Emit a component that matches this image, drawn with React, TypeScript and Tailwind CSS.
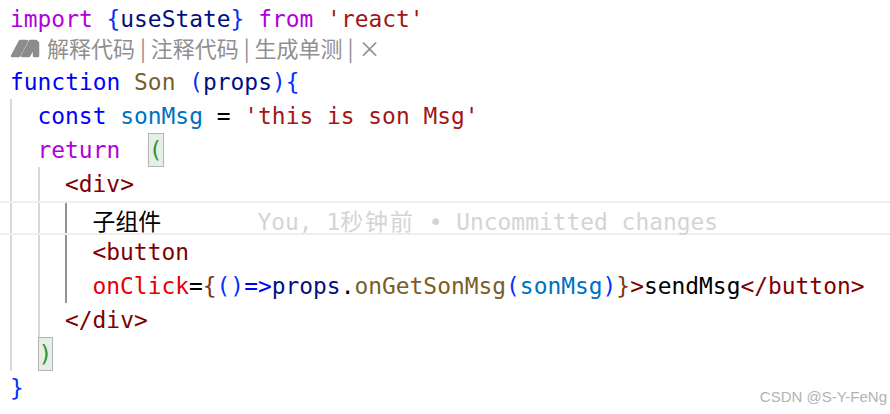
import React from 'react';

const KW = 'text-[#af00db]';
const ST = 'text-[#0000ff]';
const B1 = 'text-[#0431fa]';
const B2 = 'text-[#319331]';
const B3 = 'text-[#7b3814]';
const VAR = 'text-[#001080]';
const CVAR = 'text-[#0070c1]';
const STR = 'text-[#a31515]';
const FN = 'text-[#795e26]';
const TAG = 'text-[#800000]';
const ATTR = 'text-[#e50000]';

const Line: React.FC<{ children: React.ReactNode; className?: string }> = ({ children, className = '' }) => (
    <div className={`h-[34px] leading-[34px] whitespace-pre ${className}`}>{children}</div>
);

const Guide: React.FC<{ children: React.ReactNode; active?: boolean }> = ({ children, active }) => (
    <div className={`border-l-2 pl-[25.5px] ${active ? 'border-[#939393]' : 'border-[#d9d9d9]'}`}>{children}</div>
);

const Match: React.FC<{ children: React.ReactNode }> = ({ children }) => (
    <span className={`inline-block h-[34px] leading-[32px] border border-[#b4b4b4] bg-[#e6efe6] ${B2}`}>{children}</span>
);

const LensIcon = () => (
    <svg width="30" height="20" viewBox="0 0 30 20" className="shrink-0">
        <g fill="#8c8c8c" stroke="#8c8c8c" strokeWidth="2.5" strokeLinejoin="round">
            <polygon points="2,18 9,18 17,3 10,3" />
            <polygon points="12,18 19,18 24,9 24,18 28,18 28,5 26,3 20,3" />
        </g>
    </svg>
);

export default function App() {
    return (
        <div className="relative w-[890px] h-[414px] overflow-hidden bg-white font-['DejaVu_Sans_Mono','Noto_Sans_CJK_SC',monospace] text-[22.9px] text-black">
            <div className="pt-[2px] pl-[10px]">
                <Line>
                    <span className={KW}>import</span> <span className={B1}>{'{'}</span>
                    <span className={VAR}>useState</span>
                    <span className={B1}>{'}'}</span> <span className={KW}>from</span> <span className={STR}>'react'</span>
                </Line>

                <div className="h-[29px] pb-[6px] flex items-center gap-[7px] font-['Noto_Sans_CJK_SC',sans-serif] text-[22px] text-[#8f8f8f] whitespace-pre">
                    <LensIcon />
                    <span>解释代码 | 注释代码 | 生成单测 | ×</span>
                </div>

                <Line>
                    <span className={ST}>function</span> <span className={FN}>Son</span> <span className={B1}>(</span>
                    <span className={VAR}>props</span>
                    <span className={B1}>){'{'}</span>
                </Line>

                <Guide>
                    <Line>
                        <span className={ST}>const</span> <span className={CVAR}>sonMsg</span> = <span className={STR}>'this is son Msg'</span>
                    </Line>
                    <Line>
                        <span className={KW}>return</span>{'  '}<Match>(</Match>
                    </Line>
                    <Guide>
                        <Line>
                            <span className={TAG}>{'<div>'}</span>
                        </Line>
                        <Guide active>
                            <Line className="-ml-[93px] pl-[93px] border-y-2 border-[#eeeeee] leading-[25px] box-border">
                                <span className="inline-block w-[165px] font-['Noto_Sans_CJK_SC',serif]">子组件</span>
                                <span className="text-[#d4d4d4]">
                                    You, 1<span className="tracking-[2px]">秒钟前</span> • Uncommitted changes
                                </span>
                            </Line>
                            <Line>
                                <span className={TAG}>{'<button'}</span>
                            </Line>
                            <Line>
                                <span className={ATTR}>onClick</span>=<span className={B3}>{'{'}</span>
                                <span className={B1}>()</span>
                                <span className={ST}>{'=>'}</span>
                                <span className={VAR}>props</span>.<span className={FN}>onGetSonMsg</span>
                                <span className={B1}>(</span>
                                <span className={CVAR}>sonMsg</span>
                                <span className={B1}>)</span>
                                <span className={B3}>{'}'}</span>
                                <span className={TAG}>{'>'}</span>sendMsg<span className={TAG}>{'</button>'}</span>
                            </Line>
                        </Guide>
                        <Line>
                            <span className={TAG}>{'</div>'}</span>
                        </Line>
                    </Guide>
                    <Line>
                        <Match>)</Match>
                    </Line>
                </Guide>

                <Line>
                    <span className={B1}>{'}'}</span>
                </Line>
            </div>

            <div className="absolute right-[3px] bottom-[6px] font-['Liberation_Sans',sans-serif] text-[15px] text-[#b3b3b3]">
                CSDN @S-Y-FeNg
            </div>
        </div>
    );
}
